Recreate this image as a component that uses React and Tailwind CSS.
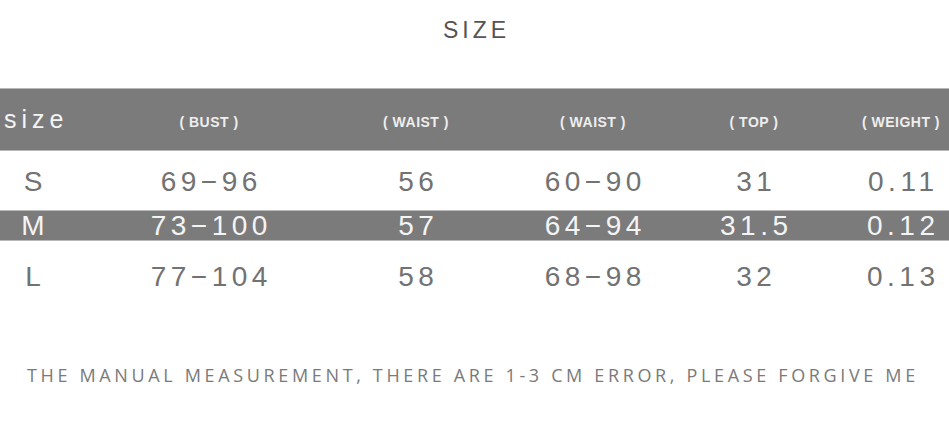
export default function App() {
  const cols = "grid grid-cols-[66px_286px_128px_226px_96px_198px] items-center";
  const rows = [
    ["S", "69−96", "56", "60−90", "31", "0.11"],
    ["M", "73−100", "57", "64−94", "31.5", "0.12"],
    ["L", "77−104", "58", "68−98", "32", "0.13"],
  ];
  const heads = ["( BUST )", "( WAIST )", "( WAIST )", "( TOP )", "( WEIGHT )"];
  return (
    <div className="w-[949px] h-[435px] bg-white overflow-hidden relative" style={{ fontFamily: '"Liberation Sans", Arial, sans-serif' }}>
      <div className="h-[88px] pt-[19px] flex justify-center">
        <div className="text-[23px] leading-[23px] tracking-[4px] text-[#555555] pl-[4px]">SIZE</div>
      </div>
      <div className={`${cols} h-[63px] bg-[#7b7b7b] border-t border-b border-[#b8b8b8] text-white`}>
        <div className="pl-[4px] text-[25px] tracking-[5px] text-[#f4f4f4] pt-[1px]">size</div>
        {heads.map((h, i) => (
          <div key={i} className="text-center text-[14px] font-bold tracking-[0.5px] text-[#eeeeee] pt-[6px] whitespace-nowrap">{h}</div>
        ))}
      </div>
      {rows.map((r, ri) => {
        const dark = ri === 1;
        return (
          <div
            key={ri}
            className={`${cols} ${dark ? "h-[31px] bg-[#7b7b7b] border-t border-b border-[#b8b8b8] text-[#f4f4f4]" : ri === 0 ? "h-[59px] pt-[2px] text-[#727272]" : "h-[72px] text-[#727272]"}`}
          >
            {r.map((c, ci) => (
              <div key={ci} className={`text-center text-[28px] leading-[28px] ${ci === 0 ? "tracking-normal" : "tracking-[4.5px] pl-[4.5px]"}`}>{c}</div>
            ))}
          </div>
        );
      })}
      <div className="mt-[52px] pl-[27px] text-[18px] leading-[20px] tracking-[3.65px] text-[#7a7a7a] whitespace-nowrap" style={{ fontFamily: '"Open Sans", sans-serif' }}>
        THE MANUAL MEASUREMENT, THERE ARE 1-3 CM ERROR, PLEASE FORGIVE ME
      </div>
    </div>
  );
}
